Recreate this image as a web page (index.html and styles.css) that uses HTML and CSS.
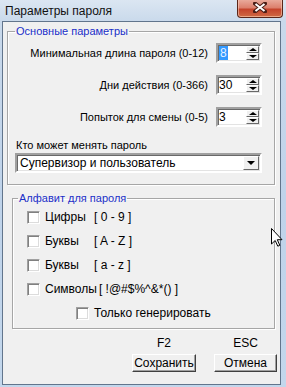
FILE: index.html
```html
<!DOCTYPE html>
<html lang="ru">
<head>
<meta charset="utf-8">
<title>Параметры пароля</title>
<link rel="stylesheet" href="styles.css">
</head>
<body>
<div class="window">
  <div class="titlebar">
    <span class="title">Параметры пароля</span>
    <button class="close" aria-label="Закрыть">
      <svg width="14" height="11" viewBox="0 0 14 11"><path d="M2 1.5 L12 9.5 M12 1.5 L2 9.5" stroke="#4a1e16" stroke-width="4" stroke-linecap="square"/><path d="M2.5 2 L11.5 9 M11.5 2 L2.5 9" stroke="#ffffff" stroke-width="2"/></svg>
    </button>
  </div>
  <div class="client">
    <fieldset class="group group-main">
      <legend>Основные параметры</legend>
      <div class="field-rows">
        <div class="field-row">
          <span class="field-label">Минимальная длина пароля (0-12)</span>
          <div class="spin"><span class="spin-value"><span class="sel">8</span></span><span class="spin-btns"><span class="spin-btn up"></span><span class="spin-btn down"></span></span></div>
        </div>
        <div class="field-row">
          <span class="field-label">Дни действия (0-366)</span>
          <div class="spin"><span class="spin-value">30</span><span class="spin-btns"><span class="spin-btn up"></span><span class="spin-btn down"></span></span></div>
        </div>
        <div class="field-row">
          <span class="field-label">Попыток для смены (0-5)</span>
          <div class="spin"><span class="spin-value">3</span><span class="spin-btns"><span class="spin-btn up"></span><span class="spin-btn down"></span></span></div>
        </div>
      </div>
      <div class="combo-label">Кто может менять пароль</div>
      <div class="combo"><span class="combo-value">Супервизор и пользователь</span><span class="combo-btn"></span></div>
    </fieldset>
    <fieldset class="group group-alpha">
      <legend>Алфавит для пароля</legend>
      <div class="check-row"><span class="checkbox"></span><span class="check-name">Цифры</span><span class="check-range">[ 0 - 9 ]</span></div>
      <div class="check-row"><span class="checkbox"></span><span class="check-name">Буквы</span><span class="check-range">[ A - Z ]</span></div>
      <div class="check-row"><span class="checkbox"></span><span class="check-name">Буквы</span><span class="check-range">[ a - z ]</span></div>
      <div class="check-row"><span class="checkbox"></span><span class="check-name">Символы</span><span class="check-range">[ !@#$%^&amp;*() ]</span></div>
      <div class="check-row check-only"><span class="checkbox"></span><span class="check-name">Только генерировать</span></div>
    </fieldset>
    <div class="actions">
      <div class="action action-save"><span class="hotkey">F2</span><button class="btn">Сохранить</button></div>
      <div class="action action-cancel"><span class="hotkey">ESC</span><button class="btn">Отмена</button></div>
    </div>
  </div>
  <svg class="cursor" width="12" height="19" viewBox="0 0 12 19"><path d="M0.5 0.5 L0.5 16 L4.2 12.5 L6.8 18.2 L8.8 17.3 L6.3 11.7 L11 11.7 Z" fill="#fff" stroke="#000" stroke-width="1" stroke-linejoin="miter"/></svg>
</div>
</body>
</html>
```
FILE: styles.css
```css
* { box-sizing: border-box; }
html, body { margin: 0; padding: 0; }
body {
  width: 286px;
  height: 387px;
  overflow: hidden;
  background: #c4d7ec;
  font-family: "Liberation Sans", Arial, sans-serif;
  font-size: 11px;
  color: #000;
}
.window {
  position: relative;
  width: 286px;
  height: 387px;
  display: flex;
  flex-direction: column;
  background: linear-gradient(to bottom, #dbe6f2 0px, #c9d9eb 22px, #bfd3ea 200px, #c3d7ec 387px);
}
.titlebar {
  height: 21px;
  flex: none;
  display: flex;
  justify-content: space-between;
  align-items: flex-start;
}
.title {
  font-size: 12px;
  line-height: 15px;
  padding: 4px 0 0 5px;
  color: #111;
}
.close {
  width: 46px;
  height: 18px;
  margin: 0 3px 0 0;
  padding: 0;
  border: 1px solid #5b2619;
  border-top: none;
  border-radius: 0 0 4px 4px;
  background: linear-gradient(to bottom, #e9a99a 0%, #dc806d 45%, #c5442c 55%, #cf6a44 100%);
  box-shadow: inset 0 -1px 0 rgba(255,210,180,0.6), inset 1px 0 rgba(255,220,200,0.5), inset -1px 0 rgba(255,220,200,0.5);
  display: flex;
  align-items: center;
  justify-content: center;
}
.close svg { display: block; margin-top: -2px; }
.client {
  flex: 1;
  margin: 0 5px 2px 2px;
  border: 1px solid #62758c;
  background: #f0f0f0;
  display: flex;
  flex-direction: column;
}
.group {
  margin: 0;
  padding: 0;
  min-width: 0;
  border: 1px solid #a6a6a6;
  box-shadow: inset 1px 1px #fff, 1px 1px #fff;
}
.group legend {
  padding: 0 1px;
  line-height: 13px;
  color: #1b2fc8;
}
.group-main {
  margin: 3px 5px 0 4px;
  padding: 5px 12px 11px 7px;
}
.field-rows {
  display: flex;
  flex-direction: column;
  gap: 12px;
}
.field-row {
  display: flex;
  justify-content: flex-end;
  align-items: center;
  gap: 8px;
  height: 20px;
}
.field-label { line-height: 13px; padding-top: 1px; }
.spin {
  width: 46px;
  height: 20px;
  display: flex;
  background: #fff;
  border: 2px solid;
  border-color: #a0a0a0 #fff #fff #a0a0a0;
  box-shadow: inset 1px 1px #696969, inset -1px -1px #e3e3e3;
  padding: 1px 1px 1px 1px;
}
.spin-value {
  flex: 1;
  line-height: 14px;
  font-size: 12px;
  padding-left: 0;
}
.sel {
  display: inline-block;
  background: #3399ff;
  color: #e8f2ff;
  padding: 0 1px;
}
.spin-btns {
  width: 13px;
  display: flex;
  flex-direction: column;
}
.spin-btn {
  flex: 1;
  background: #f0f0f0;
  border: 1px solid;
  border-color: #fff #696969 #696969 #fff;
  display: flex;
  align-items: center;
  justify-content: center;
}
.spin-btn.up::after {
  content: "";
  border-left: 4px solid transparent;
  border-right: 4px solid transparent;
  border-bottom: 3px solid #000;
}
.spin-btn.down::after {
  content: "";
  border-left: 4px solid transparent;
  border-right: 4px solid transparent;
  border-top: 3px solid #000;
}
.combo-label {
  margin: 12px 0 1px 1px;
  line-height: 13px;
}
.combo {
  height: 20px;
  display: flex;
  background: #fff;
  border: 2px solid;
  border-color: #a0a0a0 #fff #fff #a0a0a0;
  box-shadow: inset 1px 1px #696969, inset -1px -1px #e3e3e3;
  padding: 1px;
}
.combo-value {
  flex: 1;
  padding-left: 2px;
  line-height: 15px;
  font-size: 12px;
}
.combo-btn {
  width: 16px;
  background: #f0f0f0;
  border: 1px solid;
  border-color: #fff #696969 #696969 #fff;
  display: flex;
  align-items: center;
  justify-content: center;
}
.combo-btn::after {
  content: "";
  border-left: 4px solid transparent;
  border-right: 4px solid transparent;
  border-top: 4px solid #000;
}
.group-alpha {
  margin: 7px 5px 0 9px;
  padding: 0 0 3px 0;
}
.group-alpha legend { margin-left: 5px; }
.check-row {
  height: 24px;
  display: flex;
  align-items: center;
  padding-left: 14px;
  font-size: 12px;
}
.check-only { padding-left: 63px; }
.checkbox {
  width: 13px;
  height: 13px;
  flex: none;
  background: #fff;
  border: 1px solid;
  border-color: #a0a0a0 #fff #fff #a0a0a0;
  box-shadow: inset 1px 1px #808080, inset -1px -1px #dcdcdc;
  margin-right: 5px;
}
.check-name { min-width: 49px; padding-right: 2px; }
.check-range { white-space: pre; }
.actions {
  margin-top: 8px;
  padding-right: 3px;
  display: flex;
  justify-content: flex-end;
  gap: 18px;
}
.action {
  display: flex;
  flex-direction: column;
  align-items: center;
  gap: 4px;
}
.hotkey { line-height: 13px; font-size: 12px; }
.btn {
  height: 18px;
  padding: 0;
  font-family: inherit;
  font-size: 12px;
  line-height: 14px;
  color: #000;
  background: #f0f0f0;
  border: 1px solid;
  border-color: #fff #404040 #404040 #fff;
  box-shadow: inset -1px -1px #a0a0a0;
}
.action-save .btn { width: 64px; }
.action-cancel .btn { width: 63px; }
.cursor {
  position: absolute;
  left: 271px;
  top: 228px;
}
```
